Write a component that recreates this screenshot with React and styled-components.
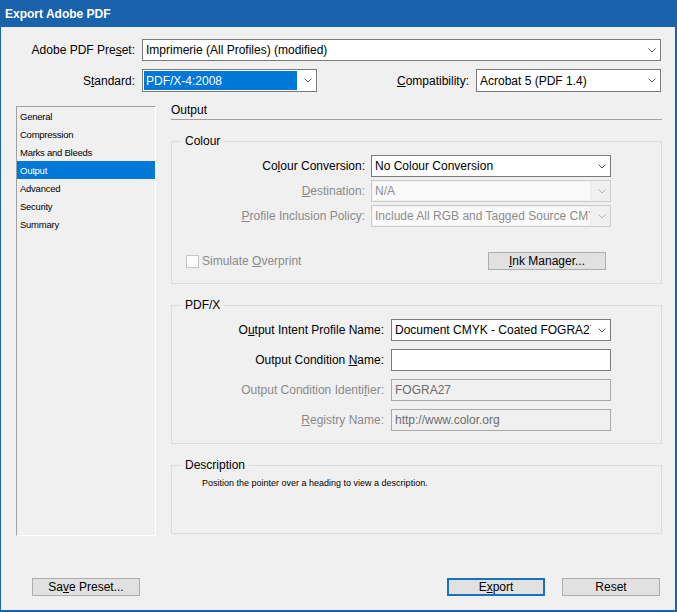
import React from 'react';
import styled, { createGlobalStyle } from 'styled-components';

const GlobalStyle = createGlobalStyle`
  html, body {
    margin: 0;
    padding: 0;
    background: #f0f0f0;
  }
  body {
    font-family: "Liberation Sans", Arial, sans-serif;
    font-size: 12px;
    color: #000;
  }
  * {
    box-sizing: border-box;
  }
`

const accent = '#1963ad'

const Window = styled.div`
  width: 677px;
  height: 612px;
  display: flex;
  flex-direction: column;
  background: #f0f0f0;
`

const TitleBar = styled.div`
  height: 27px;
  flex: none;
  background: ${accent};
  color: #fff;
  font-weight: bold;
  font-size: 12px;
  display: flex;
  align-items: center;
  padding-left: 5px;
`

const Body = styled.div`
  flex: 1;
  display: flex;
  flex-direction: column;
  border: solid ${accent};
  border-width: 0 2px 2px 1px;
`

const TopGrid = styled.div`
  display: grid;
  grid-template-columns: 134px 175px 1fr 185px;
  column-gap: 7px;
  row-gap: 8px;
  padding: 12px 14px 0 0;
`

const LabelBox = styled.label`
  display: flex;
  align-items: center;
  justify-content: flex-end;
  white-space: nowrap;
  color: ${(p) => (p.disabled ? '#8a8a8a' : '#000')};
`

const SelectBox = styled.div`
  grid-column: ${(p) => p.span || 'auto'};
  height: ${(p) => p.h || 22}px;
  display: flex;
  align-items: stretch;
  border: 1px solid ${(p) => (p.disabled ? '#cccccc' : '#7a7a7a')};
  background: ${(p) => (p.disabled ? '#f0f0f0' : '#fff')};
  overflow: hidden;
`

const SelectValue = styled.div`
  flex: 1;
  min-width: 0;
  margin: 1px;
  padding-left: 2px;
  display: flex;
  align-items: center;
  white-space: nowrap;
  overflow: hidden;
  color: ${(p) => (p.selected ? '#fff' : p.disabled ? '#8d8d8d' : '#000')};
  background: ${(p) => (p.selected ? '#0078d7' : p.disabled ? '#fafafa' : 'transparent')};
  border-right: ${(p) => (p.disabled ? '1px solid #ececec' : 'none')};
`

const Chevron = styled.div`
  width: 18px;
  flex: none;
  display: flex;
  align-items: center;
  justify-content: center;
  padding-left: 2px;
`

const TextField = styled.div`
  height: 22px;
  display: flex;
  align-items: center;
  padding-left: 3px;
  border: 1px solid ${(p) => (p.disabled ? '#a9a9a9' : '#7a7a7a')};
  background: ${(p) => (p.disabled ? '#f0f0f0' : '#fff')};
  color: ${(p) => (p.disabled ? '#6d6d6d' : '#000')};
  white-space: nowrap;
`

const Main = styled.div`
  display: flex;
  align-items: flex-start;
  gap: 15px;
  margin-top: 10px;
  padding: 0 13px 0 15px;
`

const Sidebar = styled.ul`
  list-style: none;
  margin: 4px 0 0;
  padding: 0;
  width: 140px;
  height: 430px;
  flex: none;
  border: 1px solid;
  border-color: #a0a0a0 #ffffff #ffffff #a0a0a0;
`

const NavItem = styled.li`
  height: 18px;
  display: flex;
  align-items: center;
  padding-left: 3px;
  font-size: 9.5px;
  letter-spacing: -0.25px;
  background: ${(p) => (p.active ? '#0078d7' : 'transparent')};
  color: ${(p) => (p.active ? '#fff' : '#000')};
`

const Content = styled.div`
  flex: 1;
  display: flex;
  flex-direction: column;
`

const PanelTitle = styled.div`
  height: 18px;
  line-height: 17px;
  border-bottom: 1px solid #a0a0a0;
`

const Group = styled.fieldset`
  margin: 13px 0 0;
  padding: 0;
  border: 1px solid #dcdcdc;
  min-width: 0;
`

const Legend = styled.legend`
  margin-left: 9px;
  padding: 0 4px;
  line-height: 16px;
`

const FormGrid = styled.div`
  display: grid;
  grid-template-columns: ${(p) => p.labelWidth}px ${(p) => p.fieldWidth}px;
  column-gap: ${(p) => p.colGap}px;
  row-gap: ${(p) => p.rowGap}px;
  padding: 6px 0 ${(p) => p.bottom || 0}px 0;
`

const CheckRow = styled.div`
  display: flex;
  align-items: center;
  justify-content: space-between;
  margin-top: 25px;
  padding: 0 55px 13px 14px;
`

const Check = styled.label`
  display: flex;
  align-items: center;
  gap: 3px;
  color: #8a8a8a;
`

const CheckBox = styled.span`
  width: 13px;
  height: 13px;
  border: 1px solid #c6c6c6;
  background: #fbfbfb;
`

const Button = styled.button`
  width: ${(p) => p.w}px;
  height: 18px;
  padding: 0;
  font-family: inherit;
  font-size: 12px;
  color: #000;
  background: #e1e1e1;
  border: ${(p) => (p.primary ? '2px solid #1a72bd' : '1px solid #adadad')};
`

const DescText = styled.div`
  height: 60px;
  padding: 4px 0 0 30px;
  font-size: 9px;
  line-height: 12px;
`

const Footer = styled.div`
  margin-top: auto;
  display: flex;
  align-items: center;
  padding: 0 15px 14px 31px;
`

const FooterRight = styled.div`
  margin-left: auto;
  display: flex;
  gap: 17px;
`

function Label({ disabled, children }) {
  return (
    <LabelBox disabled={disabled}>
      <span>{children}</span>
    </LabelBox>
  )
}

function ChevronIcon({ disabled }) {
  return (
    <svg width="8" height="5" viewBox="0 0 8 5">
      <polyline
        points="0.5,0.5 4,4 7.5,0.5"
        fill="none"
        stroke={disabled ? '#b5b5b5' : '#555'}
        strokeWidth="1"
      />
    </svg>
  )
}

function Select({ value, span, h, selected, disabled }) {
  return (
    <SelectBox span={span} h={h} disabled={disabled}>
      <SelectValue selected={selected} disabled={disabled}>{value}</SelectValue>
      <Chevron>
        <ChevronIcon disabled={disabled} />
      </Chevron>
    </SelectBox>
  )
}

const navItems = ['General', 'Compression', 'Marks and Bleeds', 'Output', 'Advanced', 'Security', 'Summary']

function App() {
  return (
    <Window>
      <GlobalStyle />
      <TitleBar>Export Adobe PDF</TitleBar>
      <Body>
        <TopGrid>
          <Label>Adobe PDF Pre<u>s</u>et:</Label>
          <Select span="2 / 5" value="Imprimerie (All Profiles) (modified)" />
          <Label>S<u>t</u>andard:</Label>
          <Select h={23} selected value="PDF/X-4:2008" />
          <Label><u>C</u>ompatibility:</Label>
          <Select h={23} value="Acrobat 5 (PDF 1.4)" />
        </TopGrid>

        <Main>
          <Sidebar>
            {navItems.map((item) => (
              <NavItem key={item} active={item === 'Output'}>{item}</NavItem>
            ))}
          </Sidebar>

          <Content>
            <PanelTitle>Output</PanelTitle>

            <Group>
              <Legend>Colour</Legend>
              <FormGrid labelWidth={193} fieldWidth={240} colGap={6} rowGap={3}>
                <Label>Co<u>l</u>our Conversion:</Label>
                <Select value="No Colour Conversion" />
                <Label disabled><u>D</u>estination:</Label>
                <Select disabled value="N/A" />
                <Label disabled><u>P</u>rofile Inclusion Policy:</Label>
                <Select disabled value="Include All RGB and Tagged Source CMYK" />
              </FormGrid>
              <CheckRow>
                <Check>
                  <CheckBox />
                  <span>Simulate <u>O</u>verprint</span>
                </Check>
                <Button w={118}><u>I</u>nk Manager...</Button>
              </CheckRow>
            </Group>

            <Group>
              <Legend>PDF/X</Legend>
              <FormGrid labelWidth={212} fieldWidth={220} colGap={7} rowGap={8} bottom={12}>
                <Label>O<u>u</u>tput Intent Profile Name:</Label>
                <Select value="Document CMYK - Coated FOGRA27 (ISO 12647-2:2004)" />
                <Label>Output Condition <u>N</u>ame:</Label>
                <TextField />
                <Label disabled>Output Condition Identi<u>f</u>ier:</Label>
                <TextField disabled>FOGRA27</TextField>
                <Label disabled><u>R</u>egistry Name:</Label>
                <TextField disabled>http://www.color.org</TextField>
              </FormGrid>
            </Group>

            <Group>
              <Legend>Description</Legend>
              <DescText>Position the pointer over a heading to view a description.</DescText>
            </Group>
          </Content>
        </Main>

        <Footer>
          <Button w={108}>Sa<u>v</u>e Preset...</Button>
          <FooterRight>
            <Button w={98} primary>E<u>x</u>port</Button>
            <Button w={98}>Reset</Button>
          </FooterRight>
        </Footer>
      </Body>
    </Window>
  )
}

export default App;
